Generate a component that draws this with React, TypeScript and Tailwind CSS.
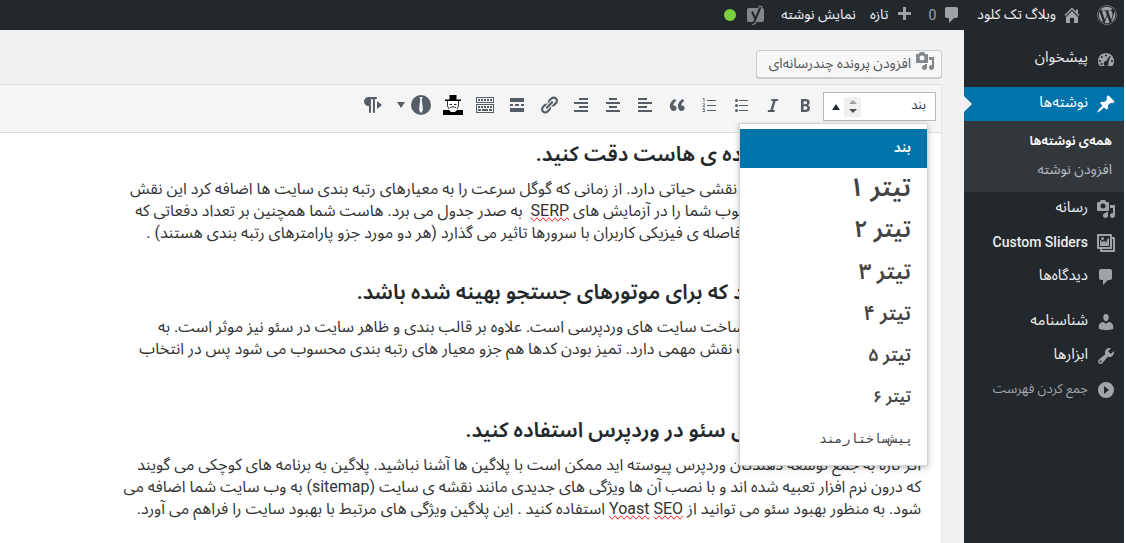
import React, { useState } from "react";
import clsx from "clsx";
import { FaWordpress } from "react-icons/fa";

interface IconProps {
  children: React.ReactNode;
  className?: string;
}

// all dashboard glyphs share a 20 x 20 grid
const Icon: React.FC<IconProps> = ({ children, className }) => (
  <svg
    viewBox="0 0 20 20"
    aria-hidden="true"
    fill="currentColor"
    className={clsx("size-5 shrink-0", className)}
  >
    {children}
  </svg>
);

const HomeIcon = (
  <path d="M16 8.5l1.53 1.53-1.06 1.06L10 4.6l-6.47 6.49-1.06-1.06L10 2.5l4 4v-2h2v4zm-6-2.46l6 5.99V18h-4v-5H8v5H4v-5.97z" />
);

const CommentIcon = (
  <path d="M5 2h9c1.1 0 2 .9 2 2v7c0 1.1-.9 2-2 2h-2l-5 5v-5H5c-1.1 0-2-.9-2-2V4c0-1.1.9-2 2-2z" />
);

const PlusIcon = <path d="M17 7v3h-5v5H9v-5H4V7h5V2h3v5h5z" />;

const YoastIcon = (
  <>
    <rect x="1" y="3" width="17" height="14" rx="2" />
    <path d="M15 1L9 15.500c-.6 1.800-1.500 2.600-3 2.800" fill="none" stroke="currentColor" strokeWidth="4" />
    <path
      d="M6 6.500l3.500 8M14.500 2L9 15.300c-.7 1.900-1.600 2.700-3.200 2.700"
      fill="none"
      stroke="#23282d"
      strokeWidth="2"
    />
  </>
);

const DashboardIcon = (
  <path
    fillRule="evenodd"
    d="M3.760 17h12.480c1.100-1.370 1.760-3.110 1.760-5 0-4.420-3.580-8-8-8s-8 3.580-8 8c0 1.890.66 3.630 1.760 5zM10 5.500a1 1 0 110 2 1 1 0 010-2zM5.800 7a1 1 0 110 2 1 1 0 010-2zM14.600 7.200l-2.300 6.200a2.500 2.500 0 11-2-1.300l3.500-5.300zM4 11a1 1 0 110 2 1 1 0 010-2zM16 11a1 1 0 110 2 1 1 0 010-2zM5.500 14a1 1 0 110 2 1 1 0 010-2z"
  />
);

const PinIcon = (
  <path d="M10.440 3.020l1.820-1.820 6.360 6.350-1.830 1.820c-1.050-.68-2.480-.57-3.410.36l-.75.75c-.92.93-1.040 2.350-.35 3.410l-1.830 1.820-2.410-2.410-2.800 2.790c-.42.42-3.380 2.710-3.800 2.290s1.860-3.390 2.280-3.810l2.790-2.790L4.100 9.360l1.830-1.820c1.050.69 2.480.57 3.400-.36l.75-.75c.93-.92 1.050-2.350.36-3.410z" />
);

const MediaIcon = (
  <path
    fillRule="evenodd"
    d="M13 11V4c0-.55-.45-1-1-1h-1.670L9 1H5L3.670 3H2c-.55 0-1 .45-1 1v7c0 .55.45 1 1 1h10c.55 0 1-.45 1-1zM7 4.500a2.500 2.500 0 110 5 2.500 2.500 0 010-5zM14 6h5v10.500c0 1.380-1.120 2.500-2.500 2.500S14 17.880 14 16.500s1.120-2.500 2.500-2.500c.17 0 .34.02.5.05V9h-3V6zm-4 8.050V13h2v3.500c0 1.380-1.120 2.500-2.500 2.500S7 17.880 7 16.500 8.120 14 9.500 14c.17 0 .34.02.5.05z"
  />
);

const GalleryIcon = (
  <path
    fillRule="evenodd"
    d="M16 4h1.960c.57 0 1.040.47 1.040 1.040v12.920c0 .57-.47 1.040-1.040 1.040H5.040C4.470 19 4 18.530 4 17.960V16H2.040C1.470 16 1 15.530 1 14.960V2.040C1 1.470 1.470 1 2.040 1h12.920c.57 0 1.040.47 1.040 1.040V4zM3 14h11V3H3v11zm5-8.500a1.500 1.500 0 10-3 0 1.500 1.500 0 003 0zm2 4.500s1-5 3-5v8H4V7c2 0 2 3 2 3s.33-2 2-2 2 2 2 2zm7 7V6h-1v8.960c0 .57-.47 1.040-1.040 1.040H6v1h11z"
  />
);

const UserIcon = (
  <path d="M10 9.250c-2.270 0-2.730-3.440-2.730-3.440C7 4.020 7.820 2 9.970 2c2.160 0 2.980 2.020 2.710 3.810 0 0-.41 3.440-2.680 3.440zm0 2.570L12.720 10c2.390 0 4.520 2.330 4.520 4.530v2.490s-3.650 1.130-7.240 1.130c-3.650 0-7.240-1.130-7.240-1.130v-2.490c0-2.250 1.940-4.480 4.470-4.480z" />
);

const ToolsIcon = (
  <path
    fillRule="evenodd"
    d="M16.680 9.770c-1.340 1.340-3.300 1.670-4.950.99l-5.410 6.520c-.99.99-2.590.99-3.580 0s-.99-2.590 0-3.570l6.520-5.420c-.68-1.650-.35-3.610.99-4.950 1.280-1.280 3.120-1.620 4.720-1.060l-2.890 2.890 2.820 2.820 2.860-2.870c.53 1.580.18 3.390-1.080 4.650zM3.810 16.210c.4.39 1.040.39 1.430 0 .4-.4.4-1.040 0-1.430-.39-.4-1.030-.4-1.430 0-.39.39-.39 1.030 0 1.430z"
  />
);

const CollapseIcon = (
  <path
    fillRule="evenodd"
    d="M10 2a8 8 0 110 16 8 8 0 010-16zM8 6v8l5-4z"
  />
);

interface Tool {
  label: string;
  icon: React.ReactNode;
  black?: boolean;
}

const tools: Tool[] = [
  {
    label: "Bold",
    icon: (
      <path
        fillRule="evenodd"
        d="M6 4v13h4.540c1.370 0 2.460-.33 3.260-1 .8-.66 1.200-1.580 1.200-2.770 0-.84-.17-1.510-.51-2.010s-.9-.85-1.670-1.030v-.09c.57-.1 1.020-.4 1.360-.9s.51-1.130.51-1.910c0-1.140-.39-1.980-1.170-2.500C12.750 4.260 11.500 4 9.780 4H6zm2.570 5.150V6.260h1.360c.73 0 1.270.11 1.610.32.34.22.51.58.51 1.070 0 .54-.16.92-.47 1.150s-.82.35-1.510.35h-1.500zm0 2.190h1.600c1.440 0 2.160.53 2.160 1.610 0 .6-.17 1.050-.51 1.340s-.86.43-1.570.43H8.570v-3.380z"
      />
    ),
  },
  {
    label: "Italic",
    icon: (
      <path d="M14.780 6h-2.130l-2.800 9h2.120l-.62 2H4.600l.62-2h2.140l2.800-9H8.030l.62-2h6.750z" />
    ),
  },
  {
    label: "Bulleted list",
    icon: (
      <>
        <circle cx="5.500" cy="5.500" r="1.500" />
        <circle cx="5.500" cy="10.500" r="1.500" />
        <circle cx="5.500" cy="15.500" r="1.500" />
        <path d="M8 5h9v1H8zM8 10h9v1H8zM8 15h9v1H8z" />
      </>
    ),
  },
  {
    label: "Numbered list",
    icon: (
      <>
        <path d="M8 5h9v1H8zM8 10h9v1H8zM8 15h9v1H8z" />
        <path
          d="M4 4l1-1v4M3.500 8.700h2V10l-1.700 1.500H6M3.500 13.500h2l-1 1.500h1.200v1.500H3.500"
          fill="none"
          stroke="currentColor"
          strokeWidth="0.8"
        />
      </>
    ),
  },
  {
    label: "Quote",
    icon: (
      <path d="M9.490 13.220c0-.74-.2-1.380-.61-1.900-.62-.78-1.830-.88-2.530-.72-.29-1.650 1.110-3.750 2.920-4.650L7.880 4c-2.730 1.300-5.420 4.280-4.960 8.050C3.210 14.430 4.590 16 6.540 16c.85 0 1.560-.25 2.120-.75s.83-1.180.83-2.030zm8.050 0c0-.74-.2-1.380-.61-1.900-.63-.78-1.830-.88-2.530-.72-.29-1.650 1.110-3.750 2.920-4.650L15.930 4c-2.730 1.300-5.410 4.280-4.950 8.050.29 2.380 1.660 3.950 3.610 3.950.85 0 1.560-.25 2.120-.75s.83-1.180.83-2.030z" />
    ),
  },
  {
    label: "Align left",
    icon: <path d="M12 5V3H3v2h9zm5 4V7H3v2h14zm-5 4v-2H3v2h9zm5 4v-2H3v2h14z" />,
  },
  {
    label: "Align center",
    icon: <path d="M14 5V3H6v2h8zm3 4V7H3v2h14zm-3 4v-2H6v2h8zm3 4v-2H3v2h14z" />,
  },
  {
    label: "Align right",
    icon: <path d="M17 5V3H8v2h9zm0 4V7H3v2h14zm0 4v-2H8v2h9zm0 4v-2H3v2h14z" />,
  },
  {
    label: "Link",
    icon: (
      <path
        fillRule="evenodd"
        d="M17.740 2.760c1.680 1.690 1.680 4.410 0 6.100l-1.530 1.520c-1.120 1.120-2.700 1.470-4.140 1.090l2.620-2.610.76-.77.76-.76c.84-.84.84-2.200 0-3.040-.84-.85-2.200-.85-3.040 0l-.77.76-3.380 3.380c-.37-1.440-.02-3.020 1.100-4.140l1.520-1.530c1.690-1.680 4.420-1.680 6.100 0zM8.590 13.430l5.340-5.340c.42-.42.42-1.100 0-1.520-.44-.43-1.130-.39-1.530 0l-5.330 5.340c-.42.42-.42 1.100 0 1.520.44.43 1.130.39 1.520 0zm-.76 2.290l4.140-4.150c.38 1.440.03 3.020-1.090 4.140l-1.520 1.530c-1.690 1.680-4.410 1.680-6.100 0-1.680-1.680-1.680-4.420 0-6.100l1.530-1.520c1.120-1.120 2.700-1.470 4.140-1.100l-4.140 4.150c-.85.84-.85 2.200 0 3.050.84.84 2.200.84 3.040 0z"
      />
    ),
  },
  {
    label: "Read more",
    icon: (
      <path d="M17 7V3H3v4h14zM6 11V9H3v2h3zm6 0V9H8v2h4zm5 0V9h-3v2h3zm0 6v-4H3v4h14z" />
    ),
  },
  {
    label: "Toolbar toggle",
    icon: (
      <path
        fillRule="evenodd"
        d="M1 2h18v6H1zM2 3v4h16V3zM1 9h18v9H1zM2 10v7h16v-7zM3 4h2v2H3zM6 4h2v2H6zM9 4h2v2H9zM12 4h2v2h-2zM15 4h2v2h-2zM3 11h2v2H3zM6 11h2v2H6zM9 11h2v2H9zM12 11h2v2h-2zM15 11h2v2h-2zM3 14h3v2H3zM7 14h6v2H7zM14 14h3v2h-3z"
      />
    ),
  },
  {
    label: "Black hat",
    black: true,
    icon: (
      <>
        <path d="M4 5h12v10H4z" fill="#fff" />
        <path d="M6.500 0h7v4.500H18V6H2V4.500h4.500zM0 15h6l2 2h4l2-2h6v5H0z" />
        <path d="M4.500 6v5l1.500 3M15.500 6v5L14 14M6.500 9.500h2.500M11 9.500h2.500M7 12.800c1-1.300 5-1.300 6 0" fill="none" stroke="#333" strokeWidth="1" />
        <path d="M6.500 14.500c1.200 2.500 5.800 2.500 7 0l-1-1h-5z" fill="#fff" />
      </>
    ),
  },
  {
    label: "Tie",
    icon: (
      <>
        <circle cx="10" cy="10" r="10" />
        <path d="M8.500 2h3l-.7 2.500L12 15l-2 3.300L8 15 9.200 4.500z" fill="#f5f5f5" />
      </>
    ),
  },
];

const headings = [
  { label: "تیتر ۱", size: "text-[26px]" },
  { label: "تیتر ۲", size: "text-2xl" },
  { label: "تیتر ۳", size: "text-[22px]" },
  { label: "تیتر ۴", size: "text-xl" },
  { label: "تیتر ۵", size: "text-lg" },
  { label: "تیتر ۶", size: "text-base" },
];

const mono = "font-['Liberation_Mono','DejaVu_Sans_Mono',monospace]";

const AdminBar: React.FC = () => (
  <header className="flex h-[30px] items-center bg-[#23282d] pr-[7px] text-sm text-[#eee]">
    <a href="#about" aria-label="WordPress" className="text-[#9ea3a8]">
      <FaWordpress className="size-5" />
    </a>
    <a href="#site" className="mr-[15px] flex items-center gap-[6px]">
      <Icon className="text-[#9ea3a8]">{HomeIcon}</Icon>
      <span className="pb-[3px]">وبلاگ تک کلود</span>
    </a>
    <a href="#comments" className="mr-[15px] flex items-center gap-[6px] text-[#9ea3a8]">
      <Icon>{CommentIcon}</Icon>
      <span>0</span>
    </a>
    <a href="#new" className="mr-[14px] flex items-center gap-[6px]">
      <Icon className="text-[#9ea3a8]">{PlusIcon}</Icon>
      <span className="pb-[3px]">تازه</span>
    </a>
    <a href="#view" className="mr-[14px] pb-[3px]">
      نمایش نوشته
    </a>
    <a href="#seo" aria-label="SEO" className="mr-[15px] flex items-center gap-[10px]">
      <Icon className="text-[#82878c]">{YoastIcon}</Icon>
      <span className="size-3 rounded-full bg-[#7ad03a]" />
    </a>
  </header>
);

interface MenuItemProps {
  label: string;
  icon: React.ReactNode;
  current?: boolean;
  latin?: boolean;
}

const MenuItem: React.FC<MenuItemProps> = ({ label, icon, current, latin }) => (
  <a
    href="#menu"
    className={clsx(
      "relative flex h-[34px] items-center gap-2 pr-2",
      current ? "bg-[#0073aa] text-white" : "text-[#eee]"
    )}
  >
    <Icon className={current ? "text-white" : "text-[#9ea3a8]"}>{icon}</Icon>
    <span className={clsx("pb-[3px]", latin ? "text-sm font-medium" : "text-[15px]")}>
      {label}
    </span>
    {current && (
      <span className="absolute top-[9px] left-0 border-y-8 border-l-8 border-y-transparent border-l-[#f1f1f1]" />
    )}
  </a>
);

const Sidebar: React.FC = () => (
  <nav className="w-40 shrink-0 bg-[#23282d] pt-3">
    <MenuItem label="پیشخوان" icon={DashboardIcon} />
    <div className="h-[11px]" />
    <MenuItem label="نوشته‌ها" icon={PinIcon} current />
    <div className="flex flex-col bg-[#32373c] pt-[6px] pb-2 pr-3">
      <a href="#all" className="h-7 text-[13px] leading-7 font-semibold text-white">
        همه‌ی نوشته‌ها
      </a>
      <a href="#add" className="h-[29px] text-sm leading-7 text-[#b4b9be]">
        افزودن نوشته
      </a>
    </div>
    <MenuItem label="رسانه" icon={MediaIcon} />
    <MenuItem label="Custom Sliders" icon={GalleryIcon} latin />
    <MenuItem label="دیدگاه‌ها" icon={CommentIcon} />
    <div className="h-[11px]" />
    <MenuItem label="شناسنامه" icon={UserIcon} />
    <MenuItem label="ابزارها" icon={ToolsIcon} />
    <button
      type="button"
      className="flex h-[34px] w-full items-center gap-2 pr-2 text-[13px] text-[#a0a5aa]"
    >
      <Icon>{CollapseIcon}</Icon>
      <span className="pb-[3px]">جمع کردن فهرست</span>
    </button>
  </nav>
);

const FormatSelect: React.FC = () => {
  const [open, setOpen] = useState(true);

  return (
    <div className="relative">
      <button
        type="button"
        aria-haspopup="listbox"
        aria-expanded={open}
        onClick={() => setOpen(!open)}
        className="flex h-[29px] w-[113px] items-center border border-[#b4b9be] bg-white pr-[9px] pl-2 text-[13px] text-[#32373c]"
      >
        <span className="grow pb-1 text-right">بند</span>
        <span className="flex h-5 w-[17px] flex-col items-center justify-center gap-[5px] bg-[#f0f0f0]">
          <span className="border-x-4 border-b-4 border-x-transparent border-b-[#a0a0a0]" />
          <span className="border-x-4 border-t-4 border-x-transparent border-t-[#505050]" />
        </span>
        <span className="mr-1 border-x-4 border-b-[6px] border-x-transparent border-b-[#23282d]" />
      </button>
      {open && (
        <ul
          role="listbox"
          aria-label="Format"
          className="absolute top-[31px] right-2 z-10 w-[189px] border border-[#d4d4d4] bg-white pt-[5px] pb-[6px] text-[#444] shadow-[0_2px_6px_rgba(0,0,0,0.25)]"
        >
          <li
            role="option"
            aria-selected="true"
            className="flex h-[39px] items-center bg-[#0073aa] pr-4 pb-1 text-sm font-semibold text-white"
          >
            بند
          </li>
          {headings.map((item) => (
            <li
              key={item.label}
              role="option"
              aria-selected="false"
              className={clsx("flex h-[42px] items-center pr-4 pb-1 font-semibold", item.size)}
            >
              {item.label}
            </li>
          ))}
          <li
            role="option"
            aria-selected="false"
            className={clsx("flex h-[39px] items-center pr-[14px] text-[13px]", mono)}
          >
            پیش‌ساختارمند
          </li>
        </ul>
      )}
    </div>
  );
};

const Toolbar: React.FC = () => (
  <div className="flex h-[49px] items-start border-y border-[#dedede] bg-[#f5f5f5] pt-[7px] pr-[5px]">
    <FormatSelect />
    <div className="mr-2 flex h-[26px] items-center gap-3 text-[#555d66]">
      {tools.map((tool) => (
        <button
          key={tool.label}
          type="button"
          aria-label={tool.label}
          className={clsx(tool.black && "text-black")}
        >
          <Icon>{tool.icon}</Icon>
        </button>
      ))}
      <button
        type="button"
        aria-label="More"
        className="-mr-[6px] border-x-4 border-t-[6px] border-x-transparent border-t-[#555d66]"
      />
      <button type="button" aria-label="Left to right" className="mr-[2px]">
        <Icon>
          <path d="M5.520 2h7.430c.55 0 1 .45 1 1s-.45 1-1 1h-1v13c0 .55-.45 1-1 1s-1-.45-1-1V5c0-.55-.45-1-1-1s-1 .45-1 1v12c0 .55-.45 1-1 1s-1-.45-1-1v-5.960h-.43C3.020 11.040 1 9.020 1 6.520S3.020 2 5.520 2zM14 14l5-4-5-4v8z" />
        </Icon>
      </button>
    </div>
  </div>
);

const Misspelled: React.FC<{ children: string }> = ({ children }) => (
  <span className="[text-decoration-line:spelling-error]">{children}</span>
);

const Article: React.FC = () => (
  <article className="pt-[5px] pr-5 text-base leading-[22px] whitespace-nowrap text-[#333]">
    <h3 className="text-[21px] leading-8 font-semibold text-[#23282d]">
      و به سرعت ارائه دهنده ی هاست دقت کنید.
    </h3>
    <p className="mt-2">
      سرعت سایت در رتبه بندی، &nbsp; نقشی حیاتی دارد. از زمانی که گوگل سرعت را به معیارهای رتبه بندی سایت ها اضافه کرد این نقش
      <br />
      مهم تر شده است و هاست خوب شما را در آزمایش های <Misspelled>SERP</Misspelled>&nbsp; به صدر جدول می برد. هاست شما همچنین بر تعداد دفعاتی که
      <br />
      سایت شما قطع می شود، یا فاصله ی فیزیکی کاربران با سرورها تاثیر می گذارد (هر دو مورد جزو پارامترهای رتبه بندی هستند) .
    </p>
    <h3 className="mt-8 text-[21px] leading-8 font-semibold text-[#23282d]">
      یک قالبی انتخاب کنید که برای موتورهای جستجو بهینه شده باشد.
    </h3>
    <p className="mt-2">
      و قالب از مهمترین بخش در ساخت سایت های وردپرسی است. علاوه بر قالب بندی و ظاهر سایت در سئو نیز موثر است. به
      <br />
      علاوه بر این ها، سرعت سایت نقش مهمی دارد. تمیز بودن کدها هم جزو معیار های رتبه بندی محسوب می شود پس در انتخاب
    </p>
    <h3 className="mt-[54px] text-[21px] leading-8 font-semibold text-[#23282d]">
      از پلاگین های حرفه ای سئو در وردپرس استفاده کنید.
    </h3>
    <p className="mt-2">
      اگر تازه به جمع توسعه دهندگان وردپرس پیوسته اید ممکن است با پلاگین ها آشنا نباشید. پلاگین به برنامه های کوچکی می گویند
      <br />
      که درون نرم افزار تعبیه شده اند و با نصب آن ها ویژگی های جدیدی مانند نقشه ی سایت (sitemap) به وب سایت شما اضافه می
      <br />
      شود. به منظور بهبود سئو می توانید از <Misspelled>Yoast</Misspelled> <Misspelled>SEO</Misspelled> استفاده کنید . این پلاگین ویژگی های مرتبط با بهبود سایت را فراهم می آورد.
    </p>
  </article>
);

const App: React.FC = () => {
  return (
    <div
      dir="rtl"
      lang="fa"
      className="flex min-h-screen flex-col overflow-hidden bg-white pr-[2px] font-[Roboto,'Noto_Sans_Arabic','Noto_Sans','DejaVu_Sans',sans-serif]"
    >
      <AdminBar />
      <div className="flex grow">
        <Sidebar />
        <main className="flex min-w-0 grow flex-col bg-[#f1f1f1] pt-5 pr-[22px]">
          <button
            type="button"
            className="flex h-7 items-center gap-1 self-start rounded-[3px] border border-[#ccc] bg-[#f7f7f7] pr-[6px] pl-3 text-sm text-[#555] shadow-[0_1px_0_#ccc]"
          >
            <Icon className="mb-[6px] text-[#82878c]">{MediaIcon}</Icon>
            <span className="pb-[3px]">افزودن پرونده چندرسانه‌ای</span>
          </button>
          <section className="mt-[6px] flex grow flex-col border-r border-[#e5e5e5] bg-white">
            <Toolbar />
            <Article />
          </section>
        </main>
      </div>
    </div>
  );
};

export default App;
